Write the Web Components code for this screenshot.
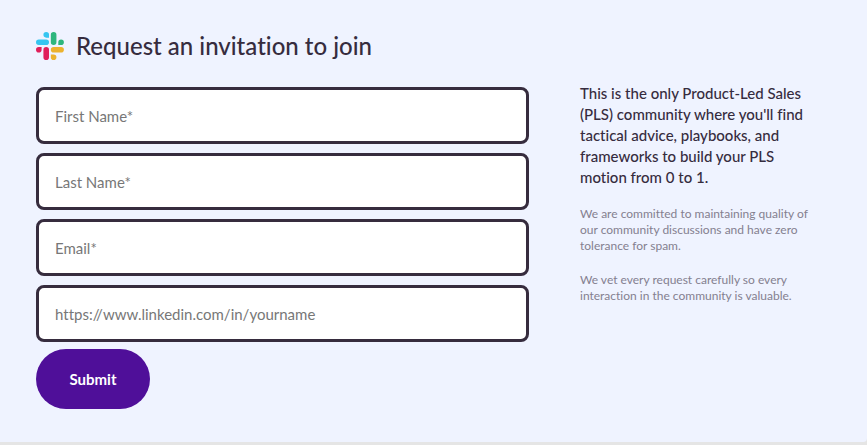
<!DOCTYPE html>
<html lang="en">
<head>
<meta charset="utf-8">
<meta name="viewport" content="width=device-width, initial-scale=1">
<title>Request an invitation to join</title>
<style>
  :root { --ink: #362c3e; --panel: #eff3ff; --muted: #84808f; --brand: #4f0f99; }
  body { margin: 0; min-height: 100vh; background: #e5e5e5; color: var(--ink); font-family: "Lato", "Liberation Sans", sans-serif; font-variant-ligatures: none; }
</style>
</head>
<body>
<invite-panel>
  <panel-heading slot="heading">Request an invitation to join</panel-heading>
  <invite-form></invite-form>
  <community-note slot="aside">
    This is the only Product-Led Sales (PLS) community where you'll find tactical advice, playbooks, and frameworks to build your PLS motion from 0 to 1.
    <p slot="details">We are committed to maintaining quality of our community discussions and have zero tolerance for spam.</p>
    <p slot="details">We vet every request carefully so every interaction in the community is valuable.</p>
  </community-note>
</invite-panel>
<script>
  class ShadowElement extends HTMLElement {
    constructor() {
      super();
      this.attachShadow({ mode: 'open' }).innerHTML = this.constructor.markup;
    }
  }

  class SlackMark extends ShadowElement {
    static markup = `
      <style>:host { display: block; flex: none; width: 28px; height: 28px; } svg { display: block; width: 100%; height: 100%; }</style>
      <svg viewBox="0 0 54 54" aria-hidden="true">
        <path fill="#36c5f0" d="M19.7.1a5.4 5.4 0 0 0 0 10.8h5.4V5.5A5.4 5.4 0 0 0 19.7.1m0 14.4H5.4a5.4 5.4 0 0 0 0 10.8h14.3a5.4 5.4 0 0 0 0-10.8"/>
        <path fill="#2eb67d" d="M53.8 19.9a5.4 5.4 0 0 0-10.8 0v5.4h5.4a5.4 5.4 0 0 0 5.4-5.4m-14.4 0V5.5a5.4 5.4 0 0 0-10.8 0v14.4a5.4 5.4 0 0 0 10.8 0"/>
        <path fill="#ecb22e" d="M34 54a5.4 5.4 0 0 0 0-10.8h-5.4v5.4A5.4 5.4 0 0 0 34 54m0-14.4h14.4a5.4 5.4 0 0 0 0-10.8H34a5.4 5.4 0 0 0 0 10.8"/>
        <path fill="#e01e5a" d="M0 34.2a5.4 5.4 0 0 0 10.8 0v-5.4H5.4A5.4 5.4 0 0 0 0 34.2m14.3 0v14.4a5.4 5.4 0 0 0 10.8 0V34.2a5.4 5.4 0 0 0-10.8 0"/>
      </svg>`;
  }
  customElements.define('slack-mark', SlackMark);

  class PanelHeading extends ShadowElement {
    static markup = `
      <style>
        :host { display: flex; align-items: center; gap: 12px; }
        h1 { margin: 0; font-size: 24px; line-height: 28px; font-weight: 500; }
      </style>
      <slack-mark></slack-mark><h1><slot></slot></h1>`;
  }
  customElements.define('panel-heading', PanelHeading);

  class TextField extends ShadowElement {
    static markup = `
      <style>
        :host { display: block; }
        input { display: block; box-sizing: border-box; width: 100%; height: 57px; margin: 0; padding: 0 16px;
          border: 3px solid var(--ink); border-radius: 8px; background: #fff; color: var(--ink); font: inherit; font-size: 15px; font-variant-ligatures: none; }
        input::placeholder { color: #777; opacity: 1; }
      </style>
      <input>`;
    connectedCallback() {
      const input = this.shadowRoot.querySelector('input');
      input.type = this.getAttribute('type') || 'text';
      input.placeholder = this.getAttribute('placeholder');
      input.setAttribute('aria-label', this.getAttribute('label'));
      input.required = this.hasAttribute('required');
    }
  }
  customElements.define('text-field', TextField);

  class InviteForm extends ShadowElement {
    static markup = `
      <style>
        :host { display: block; }
        form { display: grid; gap: 7px; justify-items: start; }
        .fields { display: grid; gap: 9px; width: 100%; }
        button { height: 60px; min-width: 114px; padding: 0 32px; border: 0; border-radius: 30px; background: var(--brand);
          color: #fff; font: inherit; font-size: 15px; font-weight: 700; cursor: pointer; }
      </style>
      <form>
        <div class="fields">
          <text-field label="First name" placeholder="First Name*" required></text-field>
          <text-field label="Last name" placeholder="Last Name*" required></text-field>
          <text-field label="Email" type="email" placeholder="Email*" required></text-field>
          <text-field label="LinkedIn profile" type="url" placeholder="https://www.linkedin.com/in/yourname"></text-field>
        </div>
        <button type="submit">Submit</button>
      </form>`;
  }
  customElements.define('invite-form', InviteForm);

  class CommunityNote extends ShadowElement {
    static markup = `
      <style>
        :host { display: block; }
        .lead { margin: 0 0 18px; font-size: 15px; line-height: 21px; font-weight: 500; }
        .details { display: grid; gap: 18px; color: var(--muted); font-size: 12px; line-height: 16px; }
        ::slotted(p) { margin: 0; }
      </style>
      <p class="lead"><slot></slot></p>
      <div class="details"><slot name="details"></slot></div>`;
  }
  customElements.define('community-note', CommunityNote);

  class InvitePanel extends ShadowElement {
    static markup = `
      <style>
        :host { display: block; padding: 32px 36px 33px; background: var(--panel); border-radius: 0 0 4px 0; }
        .columns { display: grid; grid-template-columns: minmax(0, 493fr) minmax(0, 251fr); gap: 51px; margin-top: 27px; }
        .aside { margin-top: -4px; padding-right: 16px; }
      </style>
      <slot name="heading"></slot>
      <div class="columns"><slot></slot><div class="aside"><slot name="aside"></slot></div></div>`;
  }
  customElements.define('invite-panel', InvitePanel);
</script>
</body>
</html>
